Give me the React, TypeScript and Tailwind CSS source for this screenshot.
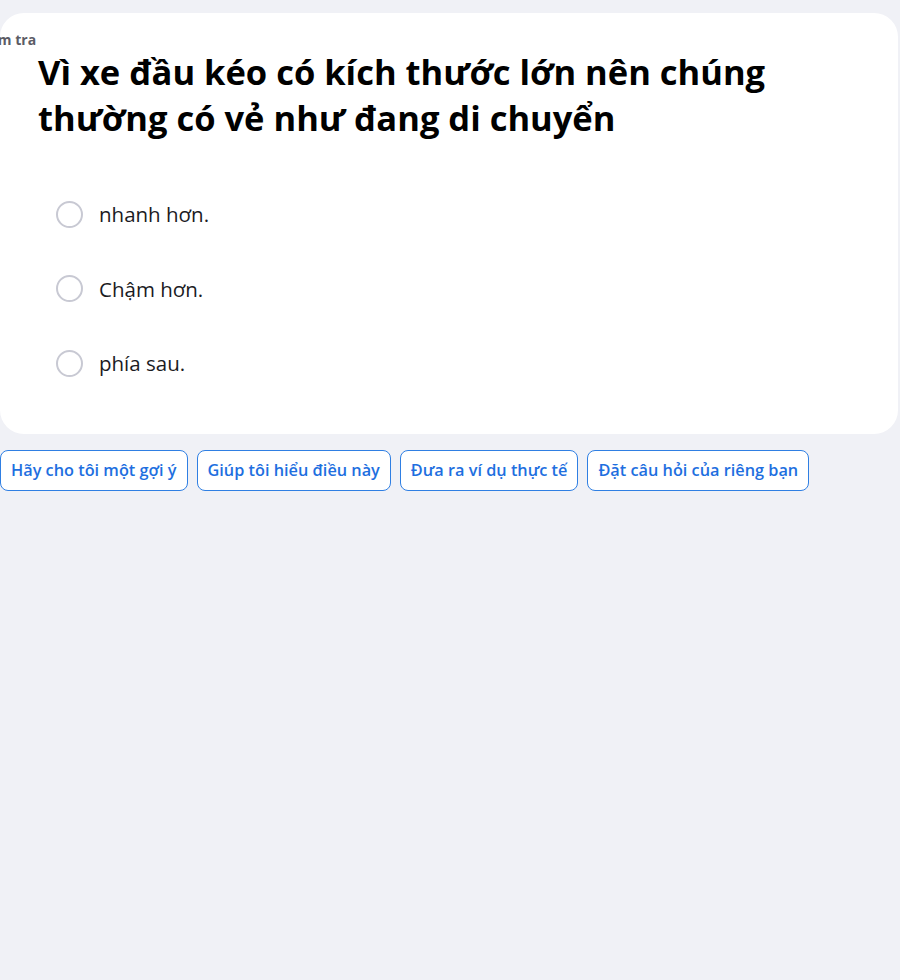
import React from 'react'

const options = ['nhanh hơn.', 'Chậm hơn.', 'phía sau.']
const prompts = [
  'Hãy cho tôi một gợi ý',
  'Giúp tôi hiểu điều này',
  'Đưa ra ví dụ thực tế',
  'Đặt câu hỏi của riêng bạn',
]

export default function App() {
  return (
    <div className="min-h-[980px] bg-[#f0f1f6] pt-[13px] font-['Open_Sans',sans-serif] overflow-hidden">
      {/* Question card */}
      <div className="mr-[2px] rounded-3xl bg-white pb-[57px]">
        <div className="pt-[18px] ml-[-24px] text-[14px] font-bold leading-[18px] text-[#5c5c66]">Kiểm tra</div>
        <h1 className="ml-[38px] mt-[0px] max-w-[800px] text-[34.5px] font-bold leading-[46px] text-black">
          Vì xe đầu kéo có kích thước lớn nên chúng thường có vẻ như đang di chuyển
        </h1>
        <div className="mt-[59px] ml-[56px] flex flex-col gap-[46.5px]">
          {options.map((o) => (
            <label key={o} className="flex items-center gap-[16px] cursor-pointer">
              <span className="h-[27px] w-[27px] rounded-full border-2 border-[#c8c9d3] bg-white" />
              <span className="text-[20.5px] leading-[28px] text-[#1b1b1f]">{o}</span>
            </label>
          ))}
        </div>
      </div>

      {/* Suggestion chips */}
      <div className="mt-[16px] flex gap-[9px]">
        {prompts.map((p) => (
          <button
            key={p}
            className="h-[41px] rounded-lg border border-[#2f7fe3] bg-white px-[10px] text-[16.3px] font-semibold text-[#1e6fe0]"
          >
            {p}
          </button>
        ))}
      </div>
    </div>
  )
}
